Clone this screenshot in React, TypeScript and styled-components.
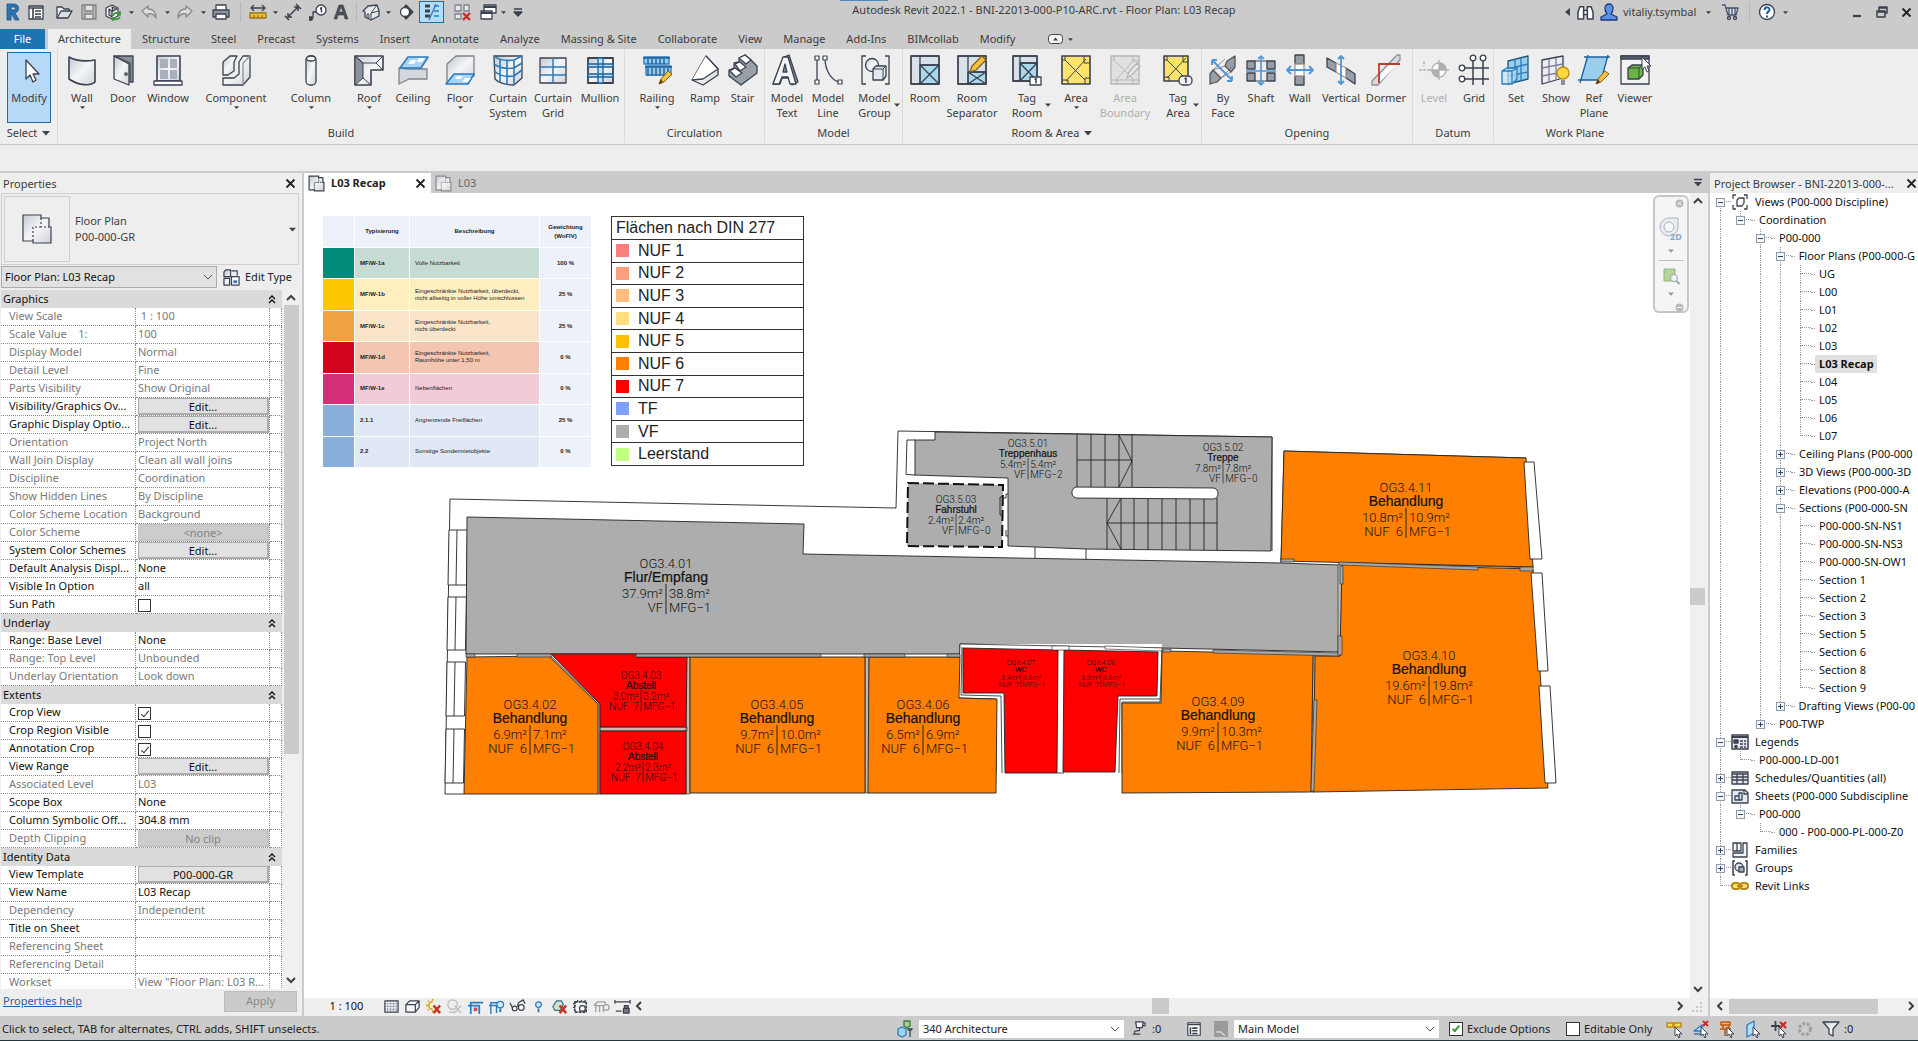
import React, { ReactNode } from "react";
import styled, { createGlobalStyle, css } from "styled-components";

const ink = "#3a4250";
const blue = "#2b7bbd";
const chrome = "#cbcbcb";
const panel = "#eeeeee";

const GlobalStyle = createGlobalStyle`
  *, *::before, *::after { box-sizing: border-box; }
  html, body, #root { height: 100%; }
  body {
    margin: 0;
    overflow: hidden;
    font-family: "Noto Sans", "Segoe UI", sans-serif;
    font-size: 11px;
    line-height: 16px;
    color: #111;
    background: ${chrome};
  }
  button, select, input {
    font: inherit;
    color: inherit;
    margin: 0;
    padding: 0;
    border: 0;
    background: none;
    border-radius: 0;
  }
  svg { display: block; flex: none; }
`;

/* ---------- shared drawing helpers ---------- */

const Art = ({ size = 32, box = 32, children }: { size?: number; box?: number; children: ReactNode }) => (
  <svg width={size} height={size} viewBox={`0 0 ${box} ${box}`} fill="none" stroke={ink} strokeWidth="1.3" strokeLinejoin="round" aria-hidden="true">
    {children}
  </svg>
);

const Caret = ({ w = 6, color = ink }: { w?: number; color?: string }) => (
  <svg width={w} height={w} viewBox="0 0 6 6" aria-hidden="true">
    <path d="M0 1.5h6L3 4.8z" fill={color} />
  </svg>
);

const Chevron = ({ dir }: { dir: "up" | "down" | "left" | "right" }) => {
  const d = { up: "M2 7l4-4 4 4", down: "M2 4l4 4 4-4", left: "M8 2L4 6l4 4", right: "M4 2l4 4-4 4" }[dir];
  return (
    <svg width="12" height="12" viewBox="0 0 12 12" aria-hidden="true">
      <path d={d} fill="none" stroke="#404040" strokeWidth="2" />
    </svg>
  );
};

const Cross = () => (
  <svg width="11" height="11" viewBox="0 0 11 11" aria-hidden="true">
    <path d="M1.5 1.5l8 8M9.5 1.5l-8 8" stroke="#222" strokeWidth="1.8" />
  </svg>
);

const Pencil = () => (
  <g strokeWidth="1">
    <path d="M18 30l2-5 7-8 4 3-8 8z" fill="#f5c33b" stroke="#8a5a1c" />
    <path d="M18 30l2-5 2 3z" fill="#5a3a10" stroke="none" />
  </g>
);

const PlanGlyph = ({ size = 17, stroke = ink }: { size?: number; stroke?: string }) => (
  <svg width={size} height={size} viewBox="0 0 32 32" fill="url(#metal)" stroke={stroke} strokeWidth={size > 20 ? 1.2 : 2.2} aria-hidden="true">
    <path d="M2 2h18v3h8v9h2v16H12v-2H2z" />
    <path d="M20 5v9h8M12 28V14h8" fill="none" strokeDasharray="2 2" />
  </svg>
);

/* ---------- ribbon pictures ---------- */

const ribbonArt: Record<string, ReactNode> = {
  modify: <path d="M13 6v19l4-4 3 7 3-2-3-6h6z" fill="#fff" />,
  wall: <path d="M3 3c7 4 14 5 26 3v22c-4 4-16 4-26-3z" fill="url(#metal)" strokeWidth="1.6" />,
  door: (
    <>
      <path d="M7 2h19v26h-3V9z" fill="#8b909b" />
      <path d="M7 2l15 8v21L7 25z" fill="url(#metal)" />
      <circle cx="19" cy="20" r="1.2" />
    </>
  ),
  window: (
    <>
      <path d="M5 2h23v25H5z" fill="url(#metal)" strokeWidth="1.6" />
      <path d="M8 5h8v9H8zM18 5h7v9h-7zM8 16h8v9H8zM18 16h7v9h-7z" fill="#a9b0bb" stroke="none" />
      <path d="M2 27h28v4H2z" fill="#fff" />
    </>
  ),
  component: (
    <>
      <path d="M3 8l7-6h7l-3 6v9l-6 4H3z" fill="url(#metal)" />
      <path d="M19 8l4-6h7v21l-7 8H3v-7h11l5-4z" fill="url(#metal)" />
      <path d="M23 9l7-7M23 9v22" stroke="#8b909b" />
    </>
  ),
  column: (
    <>
      <rect x="11" y="2" width="10" height="29" rx="4" fill="url(#metal)" />
      <ellipse cx="16" cy="4.500" rx="4.500" ry="2.500" fill="#fff" />
    </>
  ),
  roof: (
    <>
      <path d="M2 2h28v14H18v15H2z" fill="url(#metal)" strokeWidth="1.6" />
      <path d="M2 2l8 7v15l-8 7zM18 31l-8-7" fill="#8b93a0" strokeWidth="1" />
      <path d="M2 2l8 7h13l7-7M23 9l7 7" strokeWidth="1" />
    </>
  ),
  ceiling: (
    <>
      <path d="M2 14l9 1h19v10H12L2 30z" fill="#d4d7dc" stroke="#7c838e" />
      <path d="M11 3h20l-7 11H3z" fill="#a9d4f5" stroke={blue} strokeWidth="1.6" />
      <path d="M14 6h6l-3 4h-6zM22 4h6l-3 4h-5z" fill="#f4fafe" stroke="none" />
    </>
  ),
  floor: (
    <>
      <path d="M3 10l9-8h18v20H12L3 29z" fill="url(#metal)" stroke="#7c838e" />
      <path d="M10 20h20l-6 10H2z" fill="#a9d4f5" stroke={blue} strokeWidth="1.6" />
      <path d="M13 22h6l-2 3h-6zM21 24h6l-3 4h-6z" fill="#f4fafe" stroke="none" />
    </>
  ),
  curtainSystem: (
    <>
      <path d="M2 2h28v22l-8 7C14 31 7 29 3 25z" fill="url(#metal)" />
      <path d="M2 2c5 4 12 5 20 4l8-4M22 6v25M8 5v23M15 7v24M2 10c6 4 14 5 20 4l8-5M2 17c6 5 14 6 20 5l8-6" stroke={blue} strokeWidth="1.6" />
    </>
  ),
  curtainGrid: (
    <>
      <path d="M3 4h26v25H3z" fill="url(#metal)" />
      <path d="M3 13h26M3 21h26M16 4v25" stroke={blue} strokeWidth="1.5" />
    </>
  ),
  mullion: (
    <>
      <path d="M4 4h25v25H4z" fill="url(#metal)" strokeWidth="1.8" />
      <path d="M4 10h25v3H4zM4 20h25v3H4zM14 4h5v25h-5z" fill="#bfe3fa" stroke="#1a6299" />
    </>
  ),
  railing: (
    <>
      <path d="M3 3h25v7H3zM5 12h25v9H5z" fill="#9cc9ec" stroke={blue} />
      <path d="M2 4h27M4 13h27M7 5v5M11 5v5M15 5v5M19 5v5M23 5v5M7 14v8M11 14v8M15 14v8M19 14v8M23 14v8M27 14v8" stroke="#1a6299" strokeWidth="1.4" />
      <Pencil />
    </>
  ),
  ramp: (
    <>
      <path d="M17 2l12 13v6L14 31 3 26z" fill="url(#metal)" />
      <path d="M17 2l12 13-15 10-11 1" fill="#fff" />
    </>
  ),
  stair: (
    <>
      <path d="M12 4l6-3 6 5 6 6v7L14 31 2 22v-6l5-2v-5l5-1z" fill="#9aa0aa" />
      <path d="M12 4l6-3 6 5-5 4zM8 10l5-2 6 5-6 4zM3 17l5-3 7 5-6 4z" fill="#fff" />
    </>
  ),
  modelText: (
    <>
      <path d="M2 30L13 3l5-2 9 27-6 3-3-7h-7l-2 6z" fill="#8b93a0" />
      <path d="M2 30L12 3h5l8 27h-6l-2-7h-6l-3 7zM12 18h4l-2-8z" fill="#f4f5f7" />
    </>
  ),
  modelLine: (
    <>
      <path d="M5 4v24M13 4c0 12 6 22 14 24" />
      <path d="M3 2h4v4H3zM3 26h4v4H3zM11 2h4v4h-4zM26 26h4v4h-4z" fill="#fff" strokeWidth="1.2" />
    </>
  ),
  modelGroup: (
    <>
      <path d="M7 2H3v28h4M26 2h4v28h-4" />
      <circle cx="13" cy="11" r="6.500" fill="url(#metal)" />
      <path d="M14 15l3-3h10v10l-3 4H14z" fill="#e4e7ec" />
      <path d="M14 15h10v11M24 15l3-3" strokeWidth="1" />
    </>
  ),
  room: (
    <>
      <path d="M2 2h28v28H2z" fill="#d9e1e8" />
      <path d="M11 11h19v19H11z" fill="#a8d8ea" />
      <path d="M11 2v28M11 11h19M11 30l19-19M11 11l19 19M2 2h28v28H2z" />
    </>
  ),
  roomSeparator: (
    <>
      <path d="M2 2h28v28H2z" fill="#d9e1e8" />
      <path d="M12 18h18v12H12z" fill="#a8d8ea" />
      <path d="M12 2v28M12 18h18M12 30l18-12M12 18l18 12M2 2h28v28H2z" />
      <path d="M14 18l2-6 10-10 4 4-10 10z" fill="#f5c33b" stroke="#8a5a1c" />
    </>
  ),
  tagRoom: (
    <>
      <path d="M2 2h24v25H2z" fill="#d9e1e8" />
      <path d="M9 9h17v18H9z" fill="#a8d8ea" />
      <path d="M9 2v25M9 9h17M9 27L26 9M9 9l17 18M2 2h24v25H2z" />
      <path d="M19 23h11v8H19z" fill="#fff" />
      <path d="M23.500 25.500l1.500-1v5" strokeWidth="1.5" />
    </>
  ),
  area: (
    <>
      <path d="M2 2h28v28H2z" fill="#ffe36b" strokeWidth="1.6" />
      <path d="M2 6h3V2M2 26h6v4M30 9h-6V2M30 24h-5v6M5 6l20 20M26 5L6 27" strokeWidth="1" />
    </>
  ),
  areaBoundary: (
    <g stroke="#b5b5b5">
      <path d="M2 2h28v28H2z" fill="#e0e0e0" />
      <path d="M2 6h3V2M2 26h28M24 2v5h6M5 6l20 20M26 5L6 27M8 26v4M24 26v4" strokeWidth="1" />
      <path d="M18 24l2-6 8-9 3 3-8 9z" fill="#e6e6e6" />
    </g>
  ),
  tagArea: (
    <>
      <path d="M2 2h24v25H2z" fill="#ffe36b" strokeWidth="1.6" />
      <path d="M2 6h3V2M2 23h5v4M26 8h-5V2M5 6l18 18M24 4L5 24" strokeWidth="1" />
      <rect x="17" y="22" width="13" height="9" rx="4" fill="#eef0f2" />
      <path d="M22.500 25l1.500-1v5" strokeWidth="1.5" />
    </>
  ),
  byFace: (
    <>
      <path d="M20 7l8-5v11l-4 5-6-6zM3 20l3-4 8 8-4 4-7 2z" fill="#989ea8" stroke="#555" />
      <path d="M6 16L18 12M14 24l10-6M6 16l12-11M14 24l12-12" stroke="#777" strokeWidth=".8" />
      <path d="M5 6l20 20M5 6v5M5 6h5M25 27v-5M25 27h-5" stroke="#4e95d9" strokeWidth="1.8" />
    </>
  ),
  shaft: (
    <>
      <path d="M2 7h8v8H2zM2 19h8v8H2zM22 7h8v8h-8zM22 19h8v8h-8z" fill="#989ea8" />
      <path d="M10 7h12M10 27h12" strokeWidth="1" />
      <path d="M1 17h30M16 2v29M13 5l3-3 3 3M13 28l3 3 3-3" stroke="#4e95d9" strokeWidth="1.6" />
    </>
  ),
  wallOpening: (
    <>
      <path d="M11 1h9v9h-9zM11 22h9v9h-9z" fill="#989ea8" />
      <path d="M11 10h9v12h-9z" fill="#fff" stroke="#999" />
      <path d="M3 16h26M7 12l-4 4 4 4M25 12l4 4-4 4" stroke="#4e95d9" strokeWidth="1.8" />
    </>
  ),
  vertical: (
    <>
      <path d="M2 4l9 5v9l-9-5zM21 14l9 6v10l-9-6z" fill="#989ea8" />
      <path d="M11 9l10 5v10l-10-6z" fill="#fff" stroke="#999" />
      <path d="M16 2v28M13 5l3-3 3 3M13 27l3 3 3-3" stroke="#4e95d9" strokeWidth="1.8" />
    </>
  ),
  dormer: (
    <>
      <path d="M2 27L27 1h3v5L8 31H2z" fill="#d7d9dd" stroke="#8b909b" />
      <path d="M9 22L20 10h8L9 29z" fill="#fff" stroke="none" />
      <path d="M9 29V10h21" stroke="#c0392b" strokeWidth="1.8" />
    </>
  ),
  level: (
    <g stroke="#b0b0b0">
      <path d="M1 16h12M6 7v5" strokeDasharray="3 1" />
      <circle cx="21" cy="16" r="7" fill="#fff" />
      <path d="M21 9a7 7 0 0 1 7 7h-7zM21 23a7 7 0 0 1-7-7h7zM21 6v20M12 16h19" fill="#b0b0b0" />
    </g>
  ),
  grid: (
    <>
      <path d="M6 14h25M6 25h25M15 7v24M25 7v24" strokeWidth="1.5" />
      <g fill="#fff">
        <circle cx="4" cy="14" r="2.800" />
        <circle cx="4" cy="25" r="2.800" />
        <circle cx="15" cy="4" r="2.800" />
        <circle cx="25" cy="4" r="2.800" />
      </g>
    </>
  ),
  set: (
    <>
      <path d="M8 7l20-5v23L8 30z" fill="#9bcdec" stroke="#1c567f" />
      <path d="M15 5v24M21 4v23M8 15l20-5M8 22l20-4" stroke={blue} />
      <path d="M2 17l5-3h10v11l-5 5H2z" fill="#c6e4f6" fillOpacity=".7" stroke={blue} />
      <path d="M2 17h10v13M12 17l5-3" stroke={blue} />
    </>
  ),
  show: (
    <>
      <path d="M2 6l21-4v22L2 30z" fill="#eceef1" />
      <path d="M9 5v24M16 4v22M2 14l21-4M2 22l21-4" stroke="#7f7f98" />
      <circle cx="23" cy="19" r="6" fill="#ffd93b" stroke="#b98a12" />
      <path d="M21 26h4v5h-4z" fill="#8b909b" stroke="none" />
    </>
  ),
  refPlane: (
    <>
      <path d="M9 3h21l-7 23H2z" fill="#9bcdec" stroke="none" />
      <path d="M6 3h26M0 26h24M10 1L2 29M30 1l-7 26" stroke="#1a6299" />
      <Pencil />
    </>
  ),
  viewer: (
    <>
      <path d="M2 2h28v28H2z" fill="#f3f3f3" />
      <path d="M2 2h28v3H2z" fill="#5d6370" />
      <path d="M9 14l4-3h11v10l-4 4H9z" fill="#6db33f" />
      <path d="M9 14h11v11M20 14l4-3" strokeWidth="1" />
      <path d="M23 3v12l3-2 2 5 2-1-2-5h4z" fill="#fff" strokeWidth="1" />
    </>
  ),
};

/* ---------- title bar ---------- */

const Shell = styled.div`
  height: 100%;
  display: flex;
  flex-direction: column;
  border-bottom: 1px solid #23373f;
`;

const TitleBar = styled.header`
  position: relative;
  display: flex;
  height: 29px;
  color: #3c3c3c;
`;

const LoadMark = styled.i`
  position: absolute;
  top: 0;
  left: 840px;
  width: 48px;
  height: 1px;
  background: #4e87c8;
`;

const ToolStrip = styled.div`
  display: flex;
  align-items: center;
  height: 24px;
`;

const Tool = styled.button<{ $w: number; $on?: boolean }>`
  display: grid;
  place-items: center;
  width: ${(p) => p.$w}px;
  height: 22px;
  ${(p) =>
    p.$on &&
    css`
      margin-left: 2px;
      border: 1px solid #1f6ca8;
      background: #b5dcf8;
    `}
`;

const Divider = styled.span`
  width: 1px;
  height: 20px;
  background: #b8b8b8;
  margin: 0 4px;
`;

const WindowButtons = styled.div`
  display: flex;
  margin-left: 54px;
`;

const Caption = styled.div`
  flex: 1;
  text-align: center;
  line-height: 20px;
  font-size: 11px;
`;

const UserName = styled.button`
  white-space: nowrap;
  padding: 0 2px;
  min-width: 80px;
  text-align: left;
`;

const quick: [string, number, ReactNode, boolean?][] = [
  ["Revit menu", 24, <path key="a" d="M4 1h7c6 0 6 8 1 9l4 7h-4l-4-7H8v7H4zM8 4v3h3c2 0 2-3 0-3z" fill="#2d76b5" stroke="#1c4f7f" strokeWidth=".8" />],
  ["Home", 24, <g key="a"><path d="M2 3h14v13H2z" fill="#fff" /><path d="M2 5h14M6 5v11M8 8h6M8 11h6M8 14h6" strokeWidth="1.6" /></g>],
  ["Open", 32, <g key="a"><path d="M2 15V4h5l2 2h5v3" fill="#f4f4f4" /><path d="M2 15l4-7h11l-4 7z" fill="#dcdfe4" /></g>],
  ["Save", 18, <g key="a" stroke="#858585"><path d="M2 2h14v14H2z" fill="#b5b5b5" /><path d="M5 2h8v6H5zM5 11h8v5H5z" fill="#e3e3e3" /></g>],
  ["Synchronize", 30, <g key="a"><path d="M2 5l6-3 6 3v8l-6 3-6-3z" fill="#fff" /><path d="M5 6v6l3 2V8zM8 4l5 2-4 2z" fill="#c4c8cf" /><path d="M9 13c1-4 5-4 7-1M16 14c-2 3-5 3-7 1M16 8v4h-3M9 18v-3h3" stroke="#3c9a3c" strokeWidth="1.800" /></g>],
  ["v", 6, null],
  ["Undo", 30, <path key="a" d="M2 8l6-5v3c6 0 8 3 8 9-2-4-4-5-8-4v3z" fill="#dedede" stroke="#8a8a8a" />],
  ["v", 6, null],
  ["Redo", 30, <path key="a" d="M16 8l-6-5v3c-6 0-8 3-8 9 2-4 4-5 8-4v3z" fill="#dedede" stroke="#8a8a8a" />],
  ["v", 6, null],
  ["Print", 30, <g key="a"><path d="M4 2h10v6H4z" fill="#fff" /><path d="M1 7h16v7H1z" fill="#8f96a1" /><path d="M4 11h10v5H4z" fill="#fff" /></g>],
  ["|", 0, null],
  ["Measure", 26, <g key="a"><path d="M1 10h16v5H1z" fill="#f0c13c" stroke="#9a7414" /><path d="M2 5h14M5 2L2 5l3 3M13 2l3 3-3 3" /><path d="M5 12v3M9 12v3M13 12v3" stroke="#9a7414" /></g>],
  ["v", 8, null],
  ["Aligned Dimension", 28, <path key="a" d="M4 14L14 4M4 10v4h4M10 4h4v4M1 13l4 4M12 1l5 5" strokeWidth="1.500" />],
  ["Tag by Category", 22, <g key="a"><path d="M1 15h3V9h4" /><circle cx="12" cy="7" r="5" fill="#fff" /><path d="M11 5.500l1.500-1v5M0 14h3v3H0z" fill={ink} /></g>],
  ["Text", 23, <path key="a" d="M2 16L7 2h4l5 14h-3l-1-4H6l-1 4zM7 9h4L9 4z" fill="#4a4f58" stroke="#3a3f48" strokeWidth=".6" />],
  ["|", 0, null],
  ["3D View", 20, <g key="a"><path d="M1 8l5-5 9-1 2 6v5l-8 4-6-3V9z" fill="url(#metal)" /><path d="M9 17V10l6-8M9 10l8-2M5 11v4h2v-4z" strokeWidth="1" /></g>],
  ["v", 14, null],
  ["Section", 22, <g key="a"><path d="M4 9l5-7 7 7-7 7z" fill={ink} /><circle cx="8" cy="9" r="4.500" fill="#fff" /></g>],
  ["Thin Lines", 25, <g key="a"><path d="M2 3h5M2 8h5M2 13h5" strokeWidth="3" /><path d="M11 3h5M11 8h5M11 13h5M13 1L6 17" stroke={blue} /></g>, true],
  ["Close Inactive", 35, <g key="a"><path d="M2 2h6v6H2zM2 11h6v5H2zM11 2h5v6h-5z" fill="#e7e9ec" stroke="#7c838e" /><path d="M10 10l7 7M17 10l-7 7" stroke="#cf2a27" strokeWidth="2.400" /></g>],
  ["Switch Windows", 18, <g key="a"><path d="M5 2h12v8H5zM2 8h11v8H2z" fill="#fff" /><path d="M5 4h12M2 10h11" strokeWidth="2" /></g>],
  ["v", 12, null],
  ["Customize", 18, <path key="a" d="M5 6h8M5 9h8l-4 4z" fill={ink} />],
];

/* ---------- ribbon ---------- */

const TabStrip = styled.nav`
  display: flex;
  gap: 1px;
  height: 20px;
  color: #3c3c3c;
`;

const Tab = styled.button<{ $kind?: "file" | "active" }>`
  padding: 0 10px;
  line-height: 20px;
  font-size: 11px;
  ${(p) => p.$kind === "file" && css`background: #1e74b1; color: #fff; width: 45px; margin-right: 2px;`}
  ${(p) => p.$kind === "active" && css`background: ${panel};`}
`;

const MinimizeTab = styled.button`
  display: flex;
  align-items: center;
  gap: 5px;
  margin-left: 22px;
`;

const Ribbon = styled.section`
  display: flex;
  height: 96px;
  background: ${panel};
  border-bottom: 1px solid #c6c6c6;
  color: #3c3c3c;
`;

const Group = styled.div`
  display: flex;
  flex-direction: column;
  border-right: 1px solid #dadada;
  margin-bottom: 1px;
  padding-top: 3px;
  &:last-child { border-right: 0; }
`;

const GroupRow = styled.div`
  display: flex;
  height: 72px;
`;

const GroupName = styled.div`
  display: flex;
  justify-content: center;
  align-items: center;
  gap: 5px;
  height: 20px;
  font-size: 11px;
`;

const RibbonButton = styled.button<{ $w: number; $on?: boolean; $dim?: boolean }>`
  display: flex;
  flex-direction: column;
  align-items: center;
  width: ${(p) => p.$w}px;
  padding-top: 2px;
  line-height: 15px;
  white-space: nowrap;
  color: ${(p) => (p.$dim ? "#b0b0b0" : "inherit")};
  ${(p) => p.$on && css`margin: 0 6px 0 7px; padding-top: 1px; border: 1px solid #1f6ca8; background: #b5d9f7;`}
`;

const RibbonLabel = styled.span`
  display: flex;
  align-items: center;
  gap: 3px;
  margin-top: 4px;
`;

const SideCaret = styled.span`
  margin-right: -9px;
`;

type Cmd = { art: string; label: string[]; w: number; caret?: "below" | "side"; on?: boolean; dim?: boolean };
const groups: { name: string; caret?: boolean; items: Cmd[] }[] = [
  { name: "Select", caret: true, items: [{ art: "modify", label: ["Modify"], w: 44, on: true }] },
  {
    name: "Build",
    items: [
      { art: "wall", label: ["Wall"], w: 48, caret: "below" },
      { art: "door", label: ["Door"], w: 34 },
      { art: "window", label: ["Window"], w: 56 },
      { art: "component", label: ["Component"], w: 80, caret: "below" },
      { art: "column", label: ["Column"], w: 70, caret: "below" },
      { art: "roof", label: ["Roof"], w: 46, caret: "below" },
      { art: "ceiling", label: ["Ceiling"], w: 42 },
      { art: "floor", label: ["Floor"], w: 52, caret: "below" },
      { art: "curtainSystem", label: ["Curtain", "System"], w: 44 },
      { art: "curtainGrid", label: ["Curtain", "Grid"], w: 46 },
      { art: "mullion", label: ["Mullion"], w: 48 },
    ],
  },
  {
    name: "Circulation",
    items: [
      { art: "railing", label: ["Railing"], w: 64, caret: "below" },
      { art: "ramp", label: ["Ramp"], w: 32 },
      { art: "stair", label: ["Stair"], w: 43 },
    ],
  },
  {
    name: "Model",
    items: [
      { art: "modelText", label: ["Model", "Text"], w: 44 },
      { art: "modelLine", label: ["Model", "Line"], w: 38 },
      { art: "modelGroup", label: ["Model", "Group"], w: 55, caret: "side" },
    ],
  },
  {
    name: "Room & Area",
    caret: true,
    items: [
      { art: "room", label: ["Room"], w: 44 },
      { art: "roomSeparator", label: ["Room", "Separator"], w: 50 },
      { art: "tagRoom", label: ["Tag", "Room"], w: 60, caret: "side" },
      { art: "area", label: ["Area"], w: 38, caret: "below" },
      { art: "areaBoundary", label: ["Area", "Boundary"], w: 60, dim: true },
      { art: "tagArea", label: ["Tag", "Area"], w: 46, caret: "side" },
    ],
  },
  {
    name: "Opening",
    items: [
      { art: "byFace", label: ["By", "Face"], w: 42 },
      { art: "shaft", label: ["Shaft"], w: 34 },
      { art: "wallOpening", label: ["Wall"], w: 44 },
      { art: "vertical", label: ["Vertical"], w: 38 },
      { art: "dormer", label: ["Dormer"], w: 52 },
    ],
  },
  { name: "Datum", items: [{ art: "level", label: ["Level"], w: 42, dim: true }, { art: "grid", label: ["Grid"], w: 38 }] },
  {
    name: "Work Plane",
    items: [
      { art: "set", label: ["Set"], w: 44 },
      { art: "show", label: ["Show"], w: 36 },
      { art: "refPlane", label: ["Ref", "Plane"], w: 40 },
      { art: "viewer", label: ["Viewer"], w: 42 },
    ],
  },
];

const OptionsBar = styled.div`
  height: 26px;
  background: ${panel};
`;

const Workspace = styled.main`
  flex: 1;
  min-height: 0;
  display: flex;
  border-top: 2px solid ${chrome};
`;

/* ---------- properties palette ---------- */

const Side = styled.aside<{ $w: number; $edge: "left" | "right" }>`
  display: flex;
  flex-direction: column;
  flex: none;
  width: ${(p) => p.$w}px;
  background: ${panel};
  border-${(p) => p.$edge}: 2px solid ${chrome};
`;

const SideTitle = styled.div`
  display: flex;
  justify-content: space-between;
  align-items: center;
  height: 20px;
  padding: 1px 6px 0 3px;
  color: #3c3c3c;
  white-space: nowrap;
`;

const BrowserTitle = styled(SideTitle)`
  padding: 1px 1px 0 4px;
`;

const TypeCard = styled.button`
  display: flex;
  align-items: center;
  gap: 5px;
  height: 72px;
  margin: 0 3px 0 1px;
  padding: 0 2px;
  border: 1px solid #d0d0d0;
  text-align: left;
  color: #3c3c3c;
`;

const TypeThumb = styled.span`
  display: grid;
  place-items: center;
  width: 66px;
  height: 66px;
  border: 1px solid #d0d0d0;
`;

const TypeText = styled.span`
  flex: 1;
`;

const InstanceRow = styled.div`
  display: flex;
  align-items: center;
  height: 25px;
  padding: 1px 0 2px 1px;
`;

const Combo = styled.span<{ $w: number; $flat?: boolean }>`
  display: grid;
  align-items: center;
  width: ${(p) => p.$w}px;
  height: ${(p) => (p.$flat ? 18 : 22)}px;
  border: 1px solid ${(p) => (p.$flat ? "#fff" : "#adadad")};
  background: ${(p) => (p.$flat ? "#fff" : "#e1e1e1")};
  & > * { grid-area: 1 / 1; }
  & > select {
    appearance: none;
    width: 100%;
    height: 100%;
    padding-left: 3px;
  }
  & > svg { justify-self: end; margin-right: 3px; pointer-events: none; }
`;

const EditType = styled.button`
  display: flex;
  align-items: center;
  gap: 5px;
  margin-left: 6px;
  color: #222;
`;

const GridWrap = styled.div`
  flex: 1;
  min-height: 0;
  display: flex;
  gap: 1px;
  padding: 0 3px 0 1px;
`;

const GridClip = styled.div`
  flex: 1;
  overflow: hidden;
`;

const PropTable = styled.table`
  width: 100%;
  table-layout: fixed;
  border-spacing: 0;
  background: #fff;
`;

const SectionHead = styled.th`
  height: 18px;
  padding: 0 6px 0 2px;
  background: #dadada;
  font-weight: 400;
  text-align: left;
  & > span { display: flex; justify-content: space-between; align-items: center; }
`;

const PropRow = styled.tr<{ $dim?: boolean }>`
  color: ${(p) => (p.$dim ? "#7a7a7a" : "#111")};
  th, td {
    height: 18px;
    padding: 0 0 0 2px;
    border-bottom: 1px dotted #8c8c8c;
    border-right: 1px dotted #8c8c8c;
    font-weight: 400;
    text-align: left;
    vertical-align: top;
    white-space: pre;
    overflow: hidden;
    line-height: 15px;
  }
  th { padding-left: 8px; }
`;

const CellButton = styled.button`
  display: block;
  width: 131px;
  height: 17px;
  line-height: 13px;
  border: 1px solid #adadad;
  border-right-width: 2px;
  border-bottom-width: 2px;
  background: #e1e1e1;
  &:disabled { background: #cccccc; border-color: #c4c4c4; color: #838383; }
`;

const Tick = styled.input<{ $size: number; $tone?: string }>`
  appearance: none;
  display: grid;
  place-items: center;
  flex: none;
  width: ${(p) => p.$size}px;
  height: ${(p) => p.$size}px;
  border: 1px solid #333;
  background: #fff;
  &:checked::before {
    content: "";
    width: 4px;
    height: 8px;
    margin-bottom: 2px;
    border: solid ${(p) => p.$tone ?? "#333"};
    border-width: 0 ${(p) => (p.$tone ? 2 : 1)}px ${(p) => (p.$tone ? 2 : 1)}px 0;
    transform: rotate(40deg);
  }
`;

const GridTick = styled(Tick)`
  margin-top: 3px;
`;

const ScrollY = styled.div`
  display: flex;
  flex-direction: column;
  align-items: center;
  flex: none;
  width: 16px;
  padding: 3px 0;
  background: #f0f0f0;
`;

const Thumb = styled.i<{ $w: number; $h: number }>`
  flex: none;
  width: ${(p) => p.$w}px;
  height: ${(p) => p.$h}px;
  background: ${chrome};
`;

const Grow = styled.i<{ $n?: number }>`
  flex: ${(p) => p.$n ?? 1};
`;

const PaletteFoot = styled.div`
  display: flex;
  justify-content: space-between;
  align-items: center;
  height: 27px;
  padding: 0 5px 3px 3px;
  a { color: #1a62b5; }
  button {
    width: 73px;
    height: 21px;
    background: ${chrome};
    border: 1px solid #bdbdbd;
    color: #8a8a8a;
  }
`;

type Val = string | { btn: string; off?: boolean } | { tick: boolean };
type Prop = [string, Val, boolean?];
const sections: [string, Prop[]][] = [
  ["Graphics", [
    ["View Scale", " 1 : 100", true],
    ["Scale Value    1:", "100", true],
    ["Display Model", "Normal", true],
    ["Detail Level", "Fine", true],
    ["Parts Visibility", "Show Original", true],
    ["Visibility/Graphics Ov...", { btn: "Edit..." }],
    ["Graphic Display Optio...", { btn: "Edit..." }],
    ["Orientation", "Project North", true],
    ["Wall Join Display", "Clean all wall joins", true],
    ["Discipline", "Coordination", true],
    ["Show Hidden Lines", "By Discipline", true],
    ["Color Scheme Location", "Background", true],
    ["Color Scheme", { btn: "<none>", off: true }, true],
    ["System Color Schemes", { btn: "Edit..." }],
    ["Default Analysis Displ...", "None"],
    ["Visible In Option", "all"],
    ["Sun Path", { tick: false }],
  ]],
  ["Underlay", [
    ["Range: Base Level", "None"],
    ["Range: Top Level", "Unbounded", true],
    ["Underlay Orientation", "Look down", true],
  ]],
  ["Extents", [
    ["Crop View", { tick: true }],
    ["Crop Region Visible", { tick: false }],
    ["Annotation Crop", { tick: true }],
    ["View Range", { btn: "Edit..." }],
    ["Associated Level", "L03", true],
    ["Scope Box", "None"],
    ["Column Symbolic Off...", "304.8 mm"],
    ["Depth Clipping", { btn: "No clip", off: true }, true],
  ]],
  ["Identity Data", [
    ["View Template", { btn: "P00-000-GR" }],
    ["View Name", "L03 Recap"],
    ["Dependency", "Independent", true],
    ["Title on Sheet", ""],
    ["Referencing Sheet", "", true],
    ["Referencing Detail", "", true],
    ["Workset", 'View "Floor Plan: L03 R...', true],
  ]],
];

const PropValue = ({ name, value }: { name: string; value: Val }) => {
  if (typeof value === "string") return <>{value}</>;
  if ("btn" in value) return <CellButton disabled={value.off}>{value.btn}</CellButton>;
  return <GridTick type="checkbox" $size={13} defaultChecked={value.tick} aria-label={name} />;
};

const Properties = () => (
  <Side $w={304} $edge="right">
    <SideTitle>Properties<button aria-label="Close Properties"><Cross /></button></SideTitle>
    <TypeCard>
      <TypeThumb><PlanGlyph size={32} /></TypeThumb>
      <TypeText>Floor Plan<br />P00-000-GR</TypeText>
      <Caret w={7} />
    </TypeCard>
    <InstanceRow>
      <Combo $w={216}>
        <select aria-label="Instance"><option>Floor Plan: L03 Recap</option></select>
        <svg width="10" height="10" viewBox="0 0 10 10"><path d="M1 3l4 4 4-4" fill="none" stroke="#555" /></svg>
      </Combo>
      <EditType>
        <Art size={17} box={18}>
          <path d="M1 3l2-2h5v7H1zM9 2h6v5M1 10h6v7H1z" fill="url(#metal)" />
          <path d="M9 8h8v9H9z" fill="#fff" /><path d="M11 12h4v3h-4z" fill={blue} stroke="none" />
        </Art>
        Edit Type
      </EditType>
    </InstanceRow>
    <GridWrap>
      <GridClip>
        <PropTable>
          <colgroup><col style={{ width: 135 }} /><col style={{ width: 134 }} /><col /></colgroup>
          {sections.map(([title, rows]) => (
            <tbody key={title}>
              <tr>
                <SectionHead colSpan={3}>
                  <span>
                    {title}
                    <svg width="8" height="10" viewBox="0 0 8 10"><path d="M1 5l3-3 3 3M1 9l3-3 3 3" fill="none" stroke="#111" strokeWidth="1.400" /></svg>
                  </span>
                </SectionHead>
              </tr>
              {rows.map(([name, value, dim]) => (
                <PropRow key={name} $dim={dim}>
                  <th scope="row">{name}</th>
                  <td><PropValue name={name} value={value} /></td>
                  <td />
                </PropRow>
              ))}
            </tbody>
          ))}
        </PropTable>
      </GridClip>
      <ScrollY>
        <Chevron dir="up" />
        <Thumb $w={15} $h={449} />
        <Grow />
        <Chevron dir="down" />
      </ScrollY>
    </GridWrap>
    <PaletteFoot><a href="#help">Properties help</a><button disabled>Apply</button></PaletteFoot>
  </Side>
);

/* ---------- drawing area ---------- */

const Center = styled.section`
  flex: 1;
  min-width: 0;
  display: flex;
  flex-direction: column;
  background: #fff;
`;

const DocTabs = styled.div`
  display: flex;
  height: 20px;
  background: ${chrome};
`;

const DocTab = styled.button<{ $active?: boolean }>`
  display: flex;
  align-items: center;
  gap: 6px;
  width: ${(p) => (p.$active ? 127 : 60)}px;
  padding: 0 5px 0 4px;
  color: ${(p) => (p.$active ? "#222" : "#666")};
  font-weight: ${(p) => (p.$active ? 700 : 400)};
  background: ${(p) => (p.$active ? "#fff" : "none")};
`;

const TabMenu = styled.button`
  margin-left: auto;
  padding: 0 5px;
`;

const CanvasRow = styled.div`
  flex: 1;
  min-height: 0;
  display: flex;
`;

const Canvas = styled.div`
  position: relative;
  flex: 1;
  overflow: hidden;
`;

const OnSheet = styled.div<{ $x: number; $y: number }>`
  position: absolute;
  left: ${(p) => p.$x}px;
  top: ${(p) => p.$y}px;
`;

const UseTable = styled.table`
  width: 270px;
  height: 253px;
  table-layout: fixed;
  border-spacing: 1px;
  font: 6px/7px "Liberation Sans", Arial, sans-serif;
  color: #222;
  th, td { padding: 0 5px; height: 30px; background: #edf1fa; text-align: left; }
  thead th { text-align: center; line-height: 9px; height: 31px; }
  td:last-child { text-align: center; font-weight: 700; }
`;

const UseRow = styled.tr<{ $solid: string; $tint: string }>`
  td:first-child { background: ${(p) => p.$solid}; }
  th, td:nth-child(3) { background: ${(p) => p.$tint}; }
`;

const uses: [string, string, string, string[], string][] = [
  ["#048c7b", "#c6dcd3", "MF/W-1a", ["Volle Nutzbarkeit"], "100 %"],
  ["#fcc600", "#ffefc0", "MF/W-1b", ["Eingeschränkte Nutzbarkeit, überdeckt,", "nicht allseitig in voller Höhe umschlossen"], "25 %"],
  ["#f3a243", "#fbe5ca", "MF/W-1c", ["Eingeschränkte Nutzbarkeit,", "nicht überdeckt"], "25 %"],
  ["#d3041c", "#f4c5b0", "MF/W-1d", ["Eingeschränkte Nutzbarkeit,", "Raumhöhe unter 1,50 m"], "0 %"],
  ["#d62f79", "#f3cad8", "MF/W-1e", ["Nebenflächen"], "0 %"],
  ["#8bafdc", "#e0e7f5", "2.1.1", ["Angrenzende Freiflächen"], "25 %"],
  ["#8bafdc", "#e0e7f5", "2.2", ["Sonstige Sondermietobjekte"], "0 %"],
];

const AreaTable = styled.table`
  width: 193px;
  height: 250px;
  border-collapse: collapse;
  font: 16px/20px "Liberation Sans", Arial, sans-serif;
  color: #222;
  th, td { padding: 0 4px; border: 1px solid #333; font-weight: 400; text-align: left; }
  th { height: 23px; }
  td { height: 22px; }
`;

const AreaKey = styled.span<{ $c: string }>`
  display: flex;
  align-items: center;
  gap: 9px;
  &::before { content: ""; width: 13px; height: 13px; background: ${(p) => p.$c}; }
`;

const areaKeys: [string, string][] = [
  ["NUF 1", "#fa8080"], ["NUF 2", "#faa080"], ["NUF 3", "#fdbf80"], ["NUF 4", "#fddf80"], ["NUF 5", "#fec000"],
  ["NUF 6", "#ff8000"], ["NUF 7", "#ff0000"], ["TF", "#80a0ff"], ["VF", "#adadad"], ["Leerstand", "#c0ff80"],
];

const CadText = styled.text`
  font-family: Roboto, "Noto Sans", sans-serif;
  font-weight: 300;
  fill: #111;
  stroke: none;
`;

const RoomName = styled.text`
  font-family: "Liberation Sans", Arial, sans-serif;
  fill: #111;
  stroke: #111;
  stroke-width: 0.2px;
`;

type TagProps = { x: number; y: number; id: string; name: string; a: string; b: string; use: string; mfg: string; size?: 14 | 10 | 7 };

const RoomTag = ({ x, y, id, name, a, b, use, mfg, size = 14 }: TagProps) => {
  const k = size / 14;
  const small = size === 14 ? 13 : size;
  const base = y + small * 0.36;
  return (
    <g>
      <CadText x={x} y={base} fontSize={small} textAnchor="middle">{id}</CadText>
      <RoomName x={x} y={base + 14 * k} fontSize={size} textAnchor="middle">{name}</RoomName>
      <CadText x={x - 3 * k} y={base + 30 * k} fontSize={small} textAnchor="end">{a}</CadText>
      <CadText x={x + 3 * k} y={base + 30 * k} fontSize={small}>{b}</CadText>
      <CadText x={x - 3 * k} y={base + 44.5 * k} fontSize={small} textAnchor="end" xmlSpace="preserve">{use}</CadText>
      <CadText x={x + 3 * k} y={base + 44.5 * k} fontSize={small}>{mfg}</CadText>
      <path d={`M${x} ${y + 21 * k}v${30 * k}`} strokeWidth={k} />
    </g>
  );
};

const tags: TagProps[] = [
  { x: 666, y: 563, id: "OG3.4.01", name: "Flur/Empfang", a: "37.9m²", b: "38.8m²", use: "VF", mfg: "MFG−1" },
  { x: 530, y: 704, id: "OG3.4.02", name: "Behandlung", a: "6.9m²", b: "7.1m²", use: "NUF  6", mfg: "MFG−1" },
  { x: 777, y: 704, id: "OG3.4.05", name: "Behandlung", a: "9.7m²", b: "10.0m²", use: "NUF  6", mfg: "MFG−1" },
  { x: 923, y: 704, id: "OG3.4.06", name: "Behandlung", a: "6.5m²", b: "6.9m²", use: "NUF  6", mfg: "MFG−1" },
  { x: 1218, y: 701, id: "OG3.4.09", name: "Behandlung", a: "9.9m²", b: "10.3m²", use: "NUF  6", mfg: "MFG−1" },
  { x: 1429, y: 655, id: "OG3.4.10", name: "Behandlung", a: "19.6m²", b: "19.8m²", use: "NUF  6", mfg: "MFG−1" },
  { x: 1406, y: 487, id: "OG3.4.11", name: "Behandlung", a: "10.8m²", b: "10.9m²", use: "NUF  6", mfg: "MFG−1" },
  { x: 641, y: 675, id: "OG3.4.03", name: "Abstell", a: "3.0m²", b: "3.2m²", use: "NUF  7", mfg: "MFG−1", size: 10 },
  { x: 643, y: 746, id: "OG3.4.04", name: "Abstell", a: "2.2m²", b: "2.3m²", use: "NUF  7", mfg: "MFG−1", size: 10 },
  { x: 956, y: 499, id: "OG3.5.03", name: "Fahrstuhl", a: "2.4m²", b: "2.4m²", use: "VF", mfg: "MFG−0", size: 10 },
  { x: 1028, y: 443, id: "OG3.5.01", name: "Treppenhaus", a: "5.4m²", b: "5.4m²", use: "VF", mfg: "MFG−2", size: 10 },
  { x: 1223, y: 447, id: "OG3.5.02", name: "Treppe", a: "7.8m²", b: "7.8m²", use: "VF", mfg: "MFG−0", size: 10 },
  { x: 1021, y: 662, id: "OG3.4.07", name: "WC", a: "3.4m²", b: "3.8m²", use: "NUF  7", mfg: "MFG−1", size: 7 },
  { x: 1101, y: 662, id: "OG3.4.08", name: "WC", a: "3.3m²", b: "3.8m²", use: "NUF  7", mfg: "MFG−1", size: 7 },
];

const orangeRooms = [
  "467,657 549,656 598,704 598,794 464,794",
  "690,657 865,657 865,793 690,793",
  "869,657 960,657 959,698 997,699 996,793 868,793",
  "1162,651 1313,654 1311,792 1122,793 1122,703 1161,703",
  "1342,564 1533,569 1548,788 1313,792 1315,656 1340,656",
  "1284,451 1526,458 1533,567 1281,561",
];
const redRooms = [
  "551,654 637,654 637,657 687,657 686,727 600,727 600,704",
  "600,731 686,731 686,794 600,794",
  "963,648 1058,650 1057,773 1005,773 1004,693 963,693",
  "1064,650 1158,652 1157,696 1118,696 1115,772 1063,772",
];
const windowsLeft = [[449, 530, 585], [448, 597, 650], [447, 662, 716], [446, 729, 783]];
const stairUp = [1077, 1091, 1105, 1119, 1132];
const stairDown = [1107, 1121, 1134, 1148, 1162, 1176, 1190, 1204, 1217];

const FloorPlan = () => (
  <svg width="1120" height="375" viewBox="440 425 1120 375" fill="none" stroke="#222" strokeWidth=".9" role="img" aria-label="Floor plan L03">
    <path d="M464 794H445L450 499l446 9 2-77 374 6v114" />
    <path d="M1281 563l3-112 242 7" />
    {windowsLeft.map(([x, t, b]) => (
      <path key={t} d={`M${x} ${t}h18.500l-1 ${b - t}h-18.500zM${x + 8} ${t}l-1 ${b - t}`} fill="#fff" />
    ))}

    <path d="M935 432l337 5-1 114-185-2-51-2-27-1v-68l-94-3v-35h21z" fill="#adadad" />
    <path d="M907 440h8v35l-9-.500zM1035 547v11M1086 549v11" fill="#fff" />
    <path d={stairUp.map((x) => `M${x} 434v53`).join("") + "M1077 460h55M1119 435l13 26-13 26"} />
    <path d={stairDown.map((x) => `M${x} 498v52`).join("") + "M1107 523h110M1121 498l-14 25 14 26"} />
    <rect x="1072" y="487" width="146" height="11" rx="5" fill="#fff" transform="rotate(.4 1072 487)" />
    <path d="M908 483l95 2-1 62-95-1z" fill="#adadad" stroke="#111" strokeWidth="2" strokeDasharray="11 4" />
    <path d="M1003 497h-3v18h3M1008 494h-2v4h-2M1006 530v6h2" />

    <path d="M467 517l337 7-1 30 478 9 58 2v87l-177-4-202-4v10H466z" fill="#adadad" />
    <g strokeWidth=".6" fill="#c4bbb0">
      <path d="M550 655l50 49v90h-3v-90l-49-48zM686 657h4v137h-4zM865 657h4v136h-4zM600 727h87v4h-87z" />
      <path d="M1313 654h4l-3 138h-3zM1338 564h4v92h-4zM1281 560l252 8v-3l-252-7z" />
    </g>
    <path d="M960 644h202l-1 59h-39l-2 70H997v-74h-38z" fill="#fff" stroke="none" />
    <path d="M996 773v-74l-38-1 2-54 202 4-2 54h-38v71M1002 773l-1-77-40-1 1-48M1057 773h7M1119 773l1-74h40" strokeWidth=".8" />
    {orangeRooms.map((p) => <polygon key={p} points={p} fill="#ff8000" />)}
    {redRooms.map((p) => <polygon key={p} points={p} fill="#ff0000" />)}

    <g fill="#a5a7aa" strokeWidth=".6">
      <path d="M466 654h9v3h-9zM517 654h34v3h-34zM636 654h185v3H636zM864 654h41v3h-41zM947 654h13v3h-13z" />
      <path d="M1281 559h13v3h-13zM1339 562l139 5v3l-139-5zM1520 567h13v4h-13zM1163 649h8v3h-8zM1213 650l127 3v3l-127-3z" />
      <path d="M1340 566h3v18h-3zM1338 636h4v19h-4zM1314 700h3l-3 91h-3z" />
      <path d="M1105 646l57 2v3l-57-2zM1052 646h17v4h-17z" fill="#fff" />
    </g>
    <g fill="#fff">
      <path d="M1524 462h10l8 97h-12zM1531 573h11l6 98h-10zM1539 686h11l6 97h-11z" />
    </g>
    {tags.map((t) => <RoomTag key={t.id} {...t} />)}
  </svg>
);

const NavBar = styled.div`
  position: absolute;
  top: 2px;
  right: 1px;
  display: flex;
  flex-direction: column;
  align-items: center;
  gap: 6px;
  width: 36px;
  height: 118px;
  padding: 2px 3px;
  border: 2px solid #c6c6c6;
  border-radius: 6px;
  background: #f5f5f5;
  hr { width: 26px; margin: 0; border: 0; border-top: 1px solid #c0c0c0; }
  & > svg:first-child, & > svg:last-child { align-self: flex-end; }
`;

const CanvasScroll = styled(ScrollY)`
  width: 18px;
  padding-right: 3px;
`;

const ViewBar = styled.div`
  display: flex;
  align-items: center;
  height: 18px;
  padding-bottom: 2px;
  background: #efefef;
`;

const ScaleButton = styled.button`
  width: 77px;
  padding-left: 8px;
`;

const BarIcon = styled.button<{ $w?: number }>`
  display: grid;
  place-items: center;
  width: ${(p) => p.$w ?? 21}px;
  height: 18px;
`;

const sun = <path d="M8 1v2M3 3l1 1M1 8h2M3 13l1-1M8 13v2M8 4a4 4 0 1 0 0 8" stroke="#d99a1e" fill="#fdf0c0" strokeWidth="1.600" />;
const redX = <path d="M9 8l7 8M16 8l-7 8" stroke="#c8321f" strokeWidth="2.600" />;
const bulb = <g><circle cx="13" cy="7" r="3.500" fill="#d4e9fa" stroke={blue} /><path d="M12 11h2v4h-2z" fill={blue} stroke="none" /></g>;
const viewTools: [string, ReactNode][] = [
  ["Detail Level", <g key="a"><path d="M2 3h14v12H2z" fill="#f4f4f4" /><path d="M2 6h14M2 9h14M2 12h14M5 3v12M8 3v12M11 3v12M14 3v12" strokeWidth=".7" strokeDasharray="1 1" /></g>],
  ["Visual Style", <path key="a" d="M2 7l4-4h10v7l-4 5H2zM2 7h10v8M12 7l4-4" fill="#f4f5f7" />],
  ["Sun Path", <g key="a">{sun}{redX}</g>],
  ["Shadows", <g key="a" opacity=".3"><circle cx="7" cy="7" r="5" /><path d="M9 8l7 8M16 8l-7 8M3 15h6" /></g>],
  ["Crop View", <g key="a"><path d="M4 17V5h13M1 8h12v9" stroke={blue} strokeWidth="1.800" /><path d="M7 10h4v4H7z" fill="#c05a5a" stroke="none" /></g>],
  ["Show Crop Region", <g key="a"><path d="M3 17V5h7M1 8h8v8" stroke={blue} strokeWidth="1.500" />{bulb}</g>],
  ["Hide/Isolate", <g key="a"><path d="M1 5l3 6M9 9l1-4 5-3 2 4" /><circle cx="6" cy="11" r="2.500" fill="#fff" /><circle cx="13" cy="10" r="3" fill="#fff" /></g>],
  ["Reveal Hidden", <g key="a"><circle cx="9" cy="7" r="3" fill="#d4e9fa" stroke={blue} /><path d="M8 11h2v4H8z" fill={blue} stroke="none" /></g>],
  ["Worksharing", <g key="a"><path d="M2 9l4-6h5l2 4-3 6H4z" fill="#cfe6cf" stroke="#2f6f8f" />{redX}</g>],
  ["Temporary View", <g key="a"><path d="M3 4h12v11H3z" fill="#f4f4f4" strokeWidth="1.800" strokeDasharray="3 1" /><path d="M1 6h2M1 10h2M6 2v2M10 2v2M14 2v2" /><circle cx="11" cy="11" r="3" fill="#fff" /></g>],
  ["Analytical Model", <g key="a" opacity=".45"><path d="M1 8l4-4h8v3M1 8h10v7M3 8v7M7 8v7" /><circle cx="14" cy="10" r="3" /></g>],
  ["Constraints", <g key="a"><path d="M1 4h16M1 2v4M17 2v4M2 14h6" /><path d="M10 11h6v5h-6zM11 11V8h4v3" fill="#777" /></g>],
];

const Drawing = () => (
  <Center>
    <DocTabs>
      <DocTab $active><PlanGlyph />L03 Recap<Grow /><Cross /></DocTab>
      <DocTab><PlanGlyph stroke="#8a8a8a" />L03</DocTab>
      <TabMenu aria-label="Tab list"><svg width="10" height="10" viewBox="0 0 10 10"><path d="M1 1.500h8" stroke={ink} strokeWidth="1.500" /><path d="M1 4h8L5 8.500z" fill={ink} /></svg></TabMenu>
    </DocTabs>
    <CanvasRow>
      <Canvas>
        <OnSheet $x={18} $y={22}>
          <UseTable>
            <colgroup><col style={{ width: 31 }} /><col style={{ width: 54 }} /><col style={{ width: 129 }} /><col /></colgroup>
            <thead><tr><td /><th>Typisierung</th><th>Beschreibung</th><th>Gewichtung<br />(WoFIV)</th></tr></thead>
            <tbody>
              {uses.map(([solid, tint, code, lines, pct]) => (
                <UseRow key={code} $solid={solid} $tint={tint}>
                  <td /><th scope="row">{code}</th><td>{lines.map((l) => <div key={l}>{l}</div>)}</td><td>{pct}</td>
                </UseRow>
              ))}
            </tbody>
          </UseTable>
        </OnSheet>
        <OnSheet $x={307} $y={23}>
          <AreaTable>
            <thead><tr><th>Flächen nach DIN 277</th></tr></thead>
            <tbody>{areaKeys.map(([n, c]) => <tr key={n}><td><AreaKey $c={c}>{n}</AreaKey></td></tr>)}</tbody>
          </AreaTable>
        </OnSheet>
        <OnSheet $x={136} $y={232}><FloorPlan /></OnSheet>
        <NavBar>
          <svg width="9" height="9" viewBox="0 0 9 9"><circle cx="4.500" cy="4.500" r="4" fill="#b9b9b9" /><path d="M3 3l3 3M6 3L3 6" stroke="#fff" /></svg>
          <svg width="26" height="28" viewBox="0 0 26 28"><path d="M12 4h8v10a9 9 0 1 1-8-10z" fill="#e9edf2" stroke="#a9b2bf" /><circle cx="11" cy="13" r="5" fill="#f7f7f7" stroke="#a9b2bf" /><text x="12" y="26" fontSize="9" fontWeight="700" fill="#8aa6c8">2D</text></svg>
          <Caret w={6} color="#9a9a9a" />
          <hr />
          <svg width="18" height="18" viewBox="0 0 18 18"><path d="M2 2h11v12H2z" fill="#b5d59a" stroke="#93b878" /><circle cx="12" cy="11" r="3.500" fill="#eef4fa" stroke="#9aa5b4" /><path d="M14.500 14l3 3" stroke="#9aa5b4" strokeWidth="2" /></svg>
          <Caret w={6} color="#9a9a9a" />
          <svg width="9" height="9" viewBox="0 0 9 9"><circle cx="4.500" cy="4.500" r="4" fill="#b9b9b9" /><path d="M2 4.500h5" stroke="#fff" /></svg>
        </NavBar>
      </Canvas>
      <CanvasScroll>
        <Chevron dir="up" /><Grow $n={383} /><Thumb $w={15} $h={17} /><Grow $n={382} /><Chevron dir="down" />
      </CanvasScroll>
    </CanvasRow>
    <ViewBar>
      <ScaleButton>1 : 100</ScaleButton>
      {viewTools.map(([n, a]) => <BarIcon key={n} aria-label={n}><Art size={17} box={18}>{a}</Art></BarIcon>)}
      <Chevron dir="left" />
      <Grow $n={505} /><Thumb $w={17} $h={16} /><Grow $n={503} />
      <Chevron dir="right" />
      <svg width="22" height="14" viewBox="0 0 22 14"><path d="M14 3h2v2h-2zM14 7h2v2h-2zM10 7h2v2h-2zM14 11h2v2h-2zM10 11h2v2h-2zM6 11h2v2H6z" fill="#c4c4c4" /></svg>
    </ViewBar>
  </Center>
);

/* ---------- project browser ---------- */

type TreeNode = { label: string; icon?: string; kids?: TreeNode[]; current?: boolean; shut?: boolean };
const leaf = (label: string): TreeNode => ({ label });
const shut = (label: string, icon?: string): TreeNode => ({ label, icon, shut: true });

const tree: TreeNode[] = [
  {
    label: "Views (P00-000 Discipline)", icon: "views", kids: [{
      label: "Coordination", kids: [
        {
          label: "P00-000", kids: [
            { label: "Floor Plans (P00-000-G", kids: [...["UG", "L00", "L01", "L02", "L03"].map(leaf), { label: "L03 Recap", current: true }, ...["L04", "L05", "L06", "L07"].map(leaf)] },
            shut("Ceiling Plans (P00-000"),
            shut("3D Views (P00-000-3D"),
            shut("Elevations (P00-000-A"),
            { label: "Sections (P00-000-SN", kids: ["P00-000-SN-NS1", "P00-000-SN-NS3", "P00-000-SN-OW1", "Section 1", "Section 2", "Section 3", "Section 5", "Section 6", "Section 8", "Section 9"].map(leaf) },
            shut("Drafting Views (P00-00"),
          ],
        },
        shut("P00-TWP"),
      ],
    }],
  },
  { label: "Legends", icon: "legends", kids: [leaf("P00-000-LD-001")] },
  shut("Schedules/Quantities (all)", "schedules"),
  { label: "Sheets (P00-000 Subdiscipline", icon: "sheets", kids: [{ label: "P00-000", kids: [leaf("000 - P00-000-PL-000-Z0")] }] },
  shut("Families", "families"),
  shut("Groups", "groups"),
  { label: "Revit Links", icon: "links" },
];

const treeArt: Record<string, ReactNode> = {
  views: <path d="M5 2H2v4M13 2h3v4M5 16H2v-4M13 16h3v-4M6 7l2-2h5v5l-2 3H6z" fill="#fff" strokeWidth="1.300" />,
  legends: <g><path d="M1 2h16v14H1z" fill="#e4e7ec" strokeWidth="1.500" /><path d="M1 4h16" strokeWidth="2" /><path d="M9 8h6M9 11h6M9 14h6" strokeDasharray="3 1" /><path d="M3 7h4v3H3z" fill={ink} /><circle cx="5" cy="13.500" r="1.200" fill={ink} /></g>,
  schedules: <path d="M1 3h16v12H1zM1 5h16M1 8h16M1 11h16M6 5v10M12 5v10" fill="#e4e7ec" />,
  sheets: <path d="M1 3h13l3 3v10H1zM13 3v4h4M4 13V9h4v4zM8 13V6h3v7z" fill="#dfeaf2" />,
  families: <path d="M2 2h8v8H2zM12 2h4v14H2v-4h10zM6 2v8" fill="#f2f3f5" />,
  groups: <g><path d="M4 2H2v14h2M14 2h2v14h-2" strokeWidth="1.500" /><circle cx="8" cy="8" r="4" fill="#dfe3e8" /><path d="M8 8h5v5H8z" fill="#aab2bd" /></g>,
  links: <g stroke="#b98a12" strokeWidth="2"><rect x="1" y="6" width="8" height="6" rx="3" fill="#ffe27a" /><rect x="9" y="6" width="8" height="6" rx="3" fill="#ffe27a" /><path d="M6 9h6" /></g>,
};

const Tree = styled.ul`
  flex: 1;
  min-height: 0;
  margin: 0;
  padding: 0 0 0 1px;
  list-style: none;
  overflow: hidden;
  background: #fff;
`;

const TreeRow = styled.li`
  display: flex;
  align-items: center;
  height: 18px;
  white-space: nowrap;
`;

const Guide = styled.span<{ $up?: boolean; $down?: boolean }>`
  flex: none;
  display: grid;
  grid-template: 9px 9px / 10px 10px;
  width: 20px;
  height: 18px;
  &::before, &::after { content: ""; grid-column: 1; }
  &::before { grid-row: 1; border-right: ${(p) => (p.$up ? "1px dotted #9a9a9a" : "0")}; }
  &::after { grid-row: 2; border-right: ${(p) => (p.$down ? "1px dotted #9a9a9a" : "0")}; }
  & > button {
    grid-area: 1 / 1 / 3 / 3;
    place-self: center;
    z-index: 1;
    margin-right: 1px;
    width: 9px;
    height: 9px;
    border: 1px solid #8c9cae;
    background: #f3f6fa;
  }
  & > i { grid-area: 1 / 2; border-bottom: 1px dotted #9a9a9a; }
`;

const Reach = styled.i`
  width: 4px;
  border-bottom: 1px dotted #9a9a9a;
`;

const TreeLabel = styled.span<{ $current?: boolean; $root?: boolean }>`
  padding: 0 3px 0 4px;
  line-height: 18px;
  ${(p) => p.$root && css`padding-left: 6px;`}
  ${(p) => p.$current && css`background: #e0e0e0; font-weight: 700;`}
`;

const renderTree = (nodes: TreeNode[], trail: boolean[]): ReactNode[] =>
  nodes.flatMap((n, i) => {
    const last = i === nodes.length - 1;
    const first = trail.length === 0 && i === 0;
    const expandable = !!n.kids || n.shut;
    return [
      <TreeRow key={trail.length + n.label}>
        {trail.map((more, d) => <Guide key={d} $up={more} $down={more} />)}
        <Guide $up={!first} $down={!last}>
          <i />
          {expandable && (
            <button aria-label={(n.shut ? "Expand " : "Collapse ") + n.label}>
              <svg width="7" height="7" viewBox="0 0 7 7"><path d={n.shut ? "M1 3.500h5M3.500 1v5" : "M1 3.500h5"} stroke="#33465c" /></svg>
            </button>
          )}
        </Guide>
        {n.icon ? <Art size={18} box={18}>{treeArt[n.icon]}</Art> : <Reach />}
        <TreeLabel $current={n.current} $root={!!n.icon}>{n.label}</TreeLabel>
      </TreeRow>,
      ...(n.kids ? renderTree(n.kids, [...trail, !last]) : []),
    ];
  });

const ScrollX = styled.div`
  display: flex;
  align-items: center;
  height: 18px;
  padding: 0 1px 2px 4px;
  gap: 3px;
  background: #f0f0f0;
`;

const Browser = () => (
  <Side $w={210} $edge="left">
    <BrowserTitle>Project Browser - BNI-22013-000-...<button aria-label="Close Project Browser"><Cross /></button></BrowserTitle>
    <Tree>{renderTree(tree, [])}</Tree>
    <ScrollX><Chevron dir="left" /><Thumb $w={149} $h={15} /><Grow /><Chevron dir="right" /></ScrollX>
  </Side>
);

/* ---------- status bar ---------- */

const StatusBar = styled.footer`
  display: flex;
  align-items: center;
  height: 24px;
  padding: 1px 0 0 2px;
  background: ${chrome};
  color: #222;
`;

const Message = styled.span`
  width: 891px;
`;

const Count = styled.span`
  width: 28px;
`;

const CheckLabel = styled.label<{ $w: number }>`
  display: flex;
  align-items: center;
  gap: 4px;
  margin-left: 10px;
  white-space: nowrap;
  width: ${(p) => p.$w}px;
`;

const cursor = <path d="M9 7v9l2-2 2 4 1-1-1-3h3z" fill="#fff" strokeWidth="1" />;
const statusTools: [string, ReactNode][] = [
  ["Select Links", <g key="a"><path d="M1 3h6v4H1zM8 3h7v4H8z" fill="#ffd95c" stroke="#c08a14" strokeWidth="1.600" />{cursor}</g>],
  ["Select Underlay", <g key="a"><path d="M2 14h10M2 11l8-6v6z" fill="#cfe6f7" stroke={blue} /><path d="M11 1l5 5M16 1l-5 5" stroke="#cf2a27" strokeWidth="2" />{cursor}</g>],
  ["Select Pinned", <g key="a"><path d="M3 2h9v3H3zM5 5h6v4H5zM2 9h11M7 9v7" fill="#f4b183" stroke="#c55a11" strokeWidth="1.600" />{cursor}</g>],
  ["Select by Face", <g key="a"><path d="M3 5l7-4v12l-7 4z" fill="#b5dcf8" stroke={blue} />{cursor}</g>],
  ["Drag on Selection", <g key="a"><path d="M1 6h9M5.500 1v10" strokeWidth="1.800" /><path d="M10 2l6 6M16 2l-6 6" stroke="#cf2a27" strokeWidth="2.400" />{cursor}</g>],
  ["Background Processes", <circle key="a" cx="9" cy="9" r="5.500" stroke="#a0a0a0" strokeWidth="3" strokeDasharray="3 1.500" />],
  ["Filter", <path key="a" d="M1 2h16l-6 7v7l-4-2V9z" fill="url(#metal)" />],
];

export default function App() {
  return (
    <Shell>
      <GlobalStyle />
      <TitleBar>
        <LoadMark />
        <svg width="0" height="0" aria-hidden="true">
          <defs>
            <linearGradient id="metal" x1="0" y1="0" x2="1" y2="1">
              <stop offset="0" stopColor="#c3c9d2" /><stop offset=".5" stopColor="#f4f5f7" /><stop offset="1" stopColor="#cfd3da" />
            </linearGradient>
          </defs>
        </svg>
        <ToolStrip>
          {quick.map(([name, w, art, on], i) =>
            name === "|" ? <Divider key={i} /> : name === "v" ? (
              <Tool key={i} $w={w} aria-label="More"><Caret w={5} /></Tool>
            ) : (
              <Tool key={i} $w={w} $on={on} aria-label={name}><Art size={18} box={18}>{art}</Art></Tool>
            ),
          )}
        </ToolStrip>
        <Caption>Autodesk Revit 2022.1 - BNI-22013-000-P10-ARC.rvt - Floor Plan: L03 Recap</Caption>
        <ToolStrip>
          <Tool $w={12} aria-label="Collapse"><svg width="5" height="8" viewBox="0 0 5 8"><path d="M5 0v8L0 4z" fill={ink} /></svg></Tool>
          <Tool $w={24} aria-label="Search"><Art size={17} box={18}><path d="M1 16V9l2-6h4v13zM11 16V3h4l2 6v7zM7 7h4v4H7z" fill="#fff" strokeWidth="1.600" /></Art></Tool>
          <Tool $w={24} aria-label="Account"><Art size={18} box={18}><path d="M5 5a4 4 0 0 1 8 0c0 3-1 5-2 6l6 3v3H1v-3l6-3C6 10 5 8 5 5z" fill="#5b8fe8" stroke="#1d3c78" /></Art></Tool>
          <UserName>vitaliy.tsymbal</UserName>
          <Tool $w={14} aria-label="Account menu"><Caret w={5} /></Tool>
          <Tool $w={30} aria-label="App Store"><Art size={18} box={18}><path d="M1 2h3l3 10h8l2-7H5M8 5v7M11 5v7M14 5v7" fill="#dfe3ea" stroke="#45536e" /><circle cx="8" cy="15" r="1.500" /><circle cx="14" cy="15" r="1.500" /></Art></Tool>
          <Divider />
          <Tool $w={26} aria-label="Help"><Art size={18} box={18}><circle cx="9" cy="9" r="7.500" fill="#fff" /><path d="M6.500 7c0-4 5.500-3 5 0-.3 1.500-2.500 1.500-2.500 4M9 12.500v2" stroke="#1d5aa8" strokeWidth="2" /></Art></Tool>
          <Tool $w={10} aria-label="Help menu"><Caret w={5} /></Tool>
          <WindowButtons>
            <Tool $w={26} aria-label="Minimize"><Art size={14} box={14}><path d="M3 11h8" strokeWidth="2.200" /></Art></Tool>
            <Tool $w={24} aria-label="Restore"><Art size={14} box={14}><path d="M4 6V2h8v6h-2M4 3h8M2 6h8v6H2zM2 7h8" strokeWidth="1.500" /></Art></Tool>
            <Tool $w={24} aria-label="Close"><Cross /></Tool>
          </WindowButtons>
        </ToolStrip>
      </TitleBar>
      <TabStrip>
        <Tab $kind="file">File</Tab>
        <Tab $kind="active">Architecture</Tab>
        {["Structure", "Steel", "Precast", "Systems", "Insert", "Annotate", "Analyze", "Massing & Site", "Collaborate", "View", "Manage", "Add-Ins", "BIMcollab", "Modify"].map((t) => (
          <Tab key={t}>{t}</Tab>
        ))}
        <MinimizeTab aria-label="Minimize ribbon">
          <svg width="15" height="10" viewBox="0 0 15 10"><rect x=".5" y=".5" width="14" height="9" rx="3" fill="#f4f4f4" stroke={ink} /><path d="M5 6.500h5l-2.500-3z" fill={ink} /></svg>
          <Caret w={5} />
        </MinimizeTab>
      </TabStrip>
      <Ribbon>
        {groups.map((g) => (
          <Group key={g.name}>
            <GroupRow>
              {g.items.map((c) => (
                <RibbonButton key={c.art} $w={c.w} $on={c.on} $dim={c.dim}>
                  <Art>{ribbonArt[c.art]}</Art>
                  <RibbonLabel>
                    <span>{c.label.map((l) => <React.Fragment key={l}>{l}<br /></React.Fragment>)}</span>
                    {c.caret === "side" && <SideCaret><Caret /></SideCaret>}
                  </RibbonLabel>
                  {c.caret === "below" && <Caret w={5} />}
                </RibbonButton>
              ))}
            </GroupRow>
            <GroupName>{g.name}{g.caret && <Caret w={8} />}</GroupName>
          </Group>
        ))}
      </Ribbon>
      <OptionsBar />
      <Workspace>
        <Properties />
        <Drawing />
        <Browser />
      </Workspace>
      <StatusBar>
        <Message>Click to select, TAB for alternates, CTRL adds, SHIFT unselects.</Message>
        <BarIcon $w={26} aria-label="Worksets"><Art size={18} box={18}><path d="M7 1h6v5l-3 2-3-2z" fill="#9fd08f" stroke="#3c7a3c" /><path d="M1 9l4-2 4 2v6l-4 2-4-2z" fill="#9cd3f0" stroke={blue} /><path d="M13 8v9M11 8c0 3 4 3 4 0" /></Art></BarIcon>
        <Combo $w={205} $flat>
          <select aria-label="Active workset"><option>340 Architecture</option></select>
          <svg width="10" height="10" viewBox="0 0 10 10"><path d="M1 3l4 4 4-4" fill="none" stroke="#555" /></svg>
        </Combo>
        <BarIcon $w={28} aria-label="Editing requests"><Art size={17} box={18}><path d="M6 2h8l-1 6H7zM10 8v3l-5 1v3M3 15h8M14 3h2v3h-2" fill="#f4f4f4" /></Art></BarIcon>
        <Count>:0</Count>
        <BarIcon $w={28} aria-label="Design Options"><Art size={16} box={18}><path d="M2 2h14v14H2z" fill="#fff" /><path d="M2 4h14M5 7v8M7 8h6M7 11h6M7 14h6" strokeWidth="1.800" /></Art></BarIcon>
        <BarIcon $w={26} aria-label="Pick option"><Art size={18} box={18}><path d="M2 1h14v16H2z" fill="#9a9a9a" stroke="none" /><path d="M4 12h5l4 4" stroke="#d8d8d8" /></Art></BarIcon>
        <Combo $w={205} $flat>
          <select aria-label="Design option"><option>Main Model</option></select>
          <svg width="10" height="10" viewBox="0 0 10 10"><path d="M1 3l4 4 4-4" fill="none" stroke="#555" /></svg>
        </Combo>
        <CheckLabel $w={107}><Tick type="checkbox" $size={14} $tone="#3c9a3c" defaultChecked />Exclude Options</CheckLabel>
        <CheckLabel $w={96}><Tick type="checkbox" $size={14} />Editable Only</CheckLabel>
        {statusTools.map(([n, a]) => <BarIcon key={n} $w={26} aria-label={n}><Art size={18} box={18}>{a}</Art></BarIcon>)}
        <Count>:0</Count>
      </StatusBar>
    </Shell>
  );
}
